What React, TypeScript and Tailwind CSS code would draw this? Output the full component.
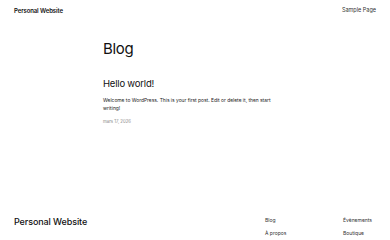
import React from "react";

const font = { fontFamily: "Inter, 'Noto Sans', sans-serif" };

const App: React.FC = () => {
    return (
        <div className="w-[390px] h-[240px] bg-white text-[#111] overflow-hidden flex flex-col" style={font}>
            {/* header */}
            <header className="flex flex-row items-center justify-between px-[14px] h-[20px]">
                <span className="text-[6px] font-semibold tracking-[-0.1px]">Personal Website</span>
                <span className="text-[5.5px] text-[#333]">Sample Page</span>
            </header>

            {/* main */}
            <main className="w-[184px] mx-auto flex flex-col">
                <h1 className="text-[15px] font-normal leading-none mt-[21px] tracking-[-0.3px]">Blog</h1>
                <h2 className="text-[9.5px] font-normal leading-none mt-[23px] tracking-[-0.2px]">Hello world!</h2>
                <p className="w-[178px] text-[4.9px] leading-[8.5px] mt-[7px] text-[#222]">
                    Welcome to WordPress. This is your first post. Edit or delete it, then start writing!
                </p>
                <span className="text-[4.3px] text-[#888] mt-[6px]">mars 17, 2026</span>
            </main>

            {/* footer */}
            <footer className="mt-auto flex flex-row items-start px-[14px] pb-[3px]">
                <span className="text-[9px] font-medium leading-none tracking-[-0.1px]">Personal Website</span>
                <div className="ml-auto flex flex-row">
                    <div className="flex flex-col gap-[5px] w-[78px] text-[5px] text-[#333]">
                        <span>Blog</span>
                        <span>À propos</span>
                    </div>
                    <div className="flex flex-col gap-[5px] w-[33px] text-[5px] text-[#333]">
                        <span>Évènements</span>
                        <span>Boutique</span>
                    </div>
                </div>
            </footer>
        </div>
    );
};

export default App;
